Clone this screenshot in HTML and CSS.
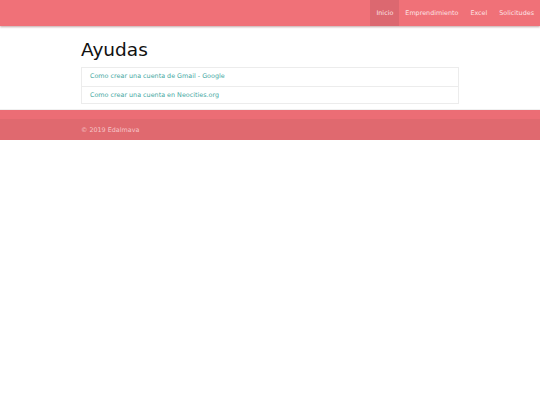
FILE: index.html
```html
<!DOCTYPE html>
<html lang="es">
<head>
<meta charset="utf-8">
<title>Ayudas</title>
<link rel="stylesheet" href="styles.css">
</head>
<body>
<header class="navbar">
  <nav class="nav">
    <a class="nav-item active" href="#">Inicio</a>
    <a class="nav-item" href="#">Emprendimiento</a>
    <a class="nav-item" href="#">Excel</a>
    <a class="nav-item" href="#">Solicitudes</a>
  </nav>
</header>
<main class="container">
  <h1 class="title">Ayudas</h1>
  <div class="list">
    <a class="list-item" href="#">Como crear una cuenta de Gmail - Google</a>
    <a class="list-item" href="#">Como crear una cuenta en Neocities.org</a>
  </div>
</main>
<footer class="footer">
  <div class="footer-top"></div>
  <div class="footer-main">
    <div class="container footer-text">© 2019 Edalmava</div>
  </div>
</footer>
</body>
</html>
```
FILE: styles.css
```css
* { box-sizing: border-box; }
html, body { margin: 0; padding: 0; background: #fff; }
body { font-family: "DejaVu Sans", Verdana, sans-serif; }
a { text-decoration: none; }

.navbar {
  height: 26px;
  background: #f07178;
  box-shadow: 0 1px 2px rgba(120, 60, 60, 0.45);
  display: flex;
  justify-content: flex-end;
}
.nav { display: flex; height: 100%; }
.nav-item {
  display: flex;
  align-items: center;
  padding: 0 6px;
  font-size: 6.4px;
  color: #fde3e4;
}
.nav-item.active { background: #dc6870; }

.container { width: 378px; margin: 0 auto; }
.title {
  font-size: 18.5px;
  font-weight: normal;
  color: #111;
  margin: 13px 0 6px;
  line-height: 22px;
}
.list {
  display: flex;
  flex-direction: column;
  border: 1px solid #ececec;
  margin-bottom: 5px;
}
.list-item {
  display: block;
  height: 17.5px;
  line-height: 17px;
  padding: 0 8px;
  font-size: 6.4px;
  color: #45a8a2;
}
.list-item + .list-item { border-top: 1px solid #ececec; }

.footer { border-top: 1px solid #f0f0f0; }
.footer-top { height: 9px; background: #ec6d75; }
.footer-main { height: 21px; background: #e0696f; display: flex; align-items: center; }
.footer-text { font-size: 6.4px; color: #f6c4c7; }
```
